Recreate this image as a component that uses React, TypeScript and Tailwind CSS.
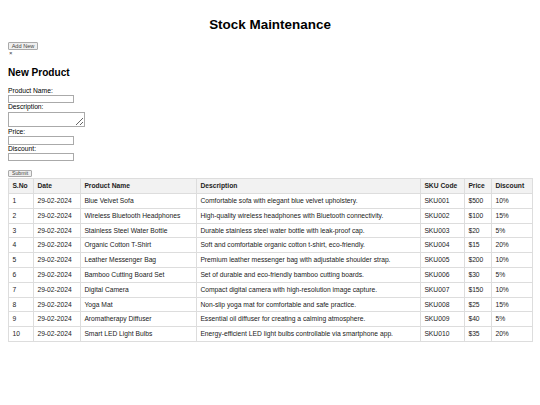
const products = [
  { name: 'Blue Velvet Sofa', desc: 'Comfortable sofa with elegant blue velvet upholstery.', sku: 'SKU001', price: '$500', disc: '10%' },
  { name: 'Wireless Bluetooth Headphones', desc: 'High-quality wireless headphones with Bluetooth connectivity.', sku: 'SKU002', price: '$100', disc: '15%' },
  { name: 'Stainless Steel Water Bottle', desc: 'Durable stainless steel water bottle with leak-proof cap.', sku: 'SKU003', price: '$20', disc: '5%' },
  { name: 'Organic Cotton T-Shirt', desc: 'Soft and comfortable organic cotton t-shirt, eco-friendly.', sku: 'SKU004', price: '$15', disc: '20%' },
  { name: 'Leather Messenger Bag', desc: 'Premium leather messenger bag with adjustable shoulder strap.', sku: 'SKU005', price: '$200', disc: '10%' },
  { name: 'Bamboo Cutting Board Set', desc: 'Set of durable and eco-friendly bamboo cutting boards.', sku: 'SKU006', price: '$30', disc: '5%' },
  { name: 'Digital Camera', desc: 'Compact digital camera with high-resolution image capture.', sku: 'SKU007', price: '$150', disc: '10%' },
  { name: 'Yoga Mat', desc: 'Non-slip yoga mat for comfortable and safe practice.', sku: 'SKU008', price: '$25', disc: '15%' },
  { name: 'Aromatherapy Diffuser', desc: 'Essential oil diffuser for creating a calming atmosphere.', sku: 'SKU009', price: '$40', disc: '5%' },
  { name: 'Smart LED Light Bulbs', desc: 'Energy-efficient LED light bulbs controllable via smartphone app.', sku: 'SKU010', price: '$35', disc: '20%' },
];

const headers = ['S.No', 'Date', 'Product Name', 'Description', 'SKU Code', 'Price', 'Discount'];
const widths = ['w-[25px]', 'w-[47px]', 'w-[116px]', 'w-[224px]', 'w-[44px]', 'w-[27px]', 'w-[41px]'];

export default function App() {
  return (
    <div className="min-h-[405px] bg-white px-[8px] font-['Liberation_Sans',Arial,sans-serif] text-[6.72px] leading-[7.7px] text-black">
      <h1 className="pt-[16.6px] text-center text-[13.44px] font-bold leading-[15.5px]">Stock Maintenance</h1>

      <button className="mt-[10.2px] block h-[8px] w-[30px] rounded-[1px] border-[0.5px] border-[#aaa] bg-[#efefef] text-[5.6px] leading-[6px] text-[#444]">
        Add New
      </button>
      <div className="pl-[1px] text-[6px] leading-[7.7px] text-[#333]">×</div>

      {/* form */}
      <h2 className="mt-[9px] text-[10.08px] font-bold leading-[11.6px]">New Product</h2>
      <div className="mt-[8px]">Product Name:</div>
      <input className="mt-[1px] block h-[8px] w-[66px] border-[0.5px] border-[#aaa]" />
      <div>Description:</div>
      <textarea className="mt-[0.6px] block h-[15px] w-[77px] resize-y border-[0.5px] border-[#aaa]" />
      <div className="mt-[1.9px]">Price:</div>
      <input className="mt-[0.1px] block h-[8.3px] w-[66px] border-[0.5px] border-[#aaa]" />
      <div>Discount:</div>
      <input className="mt-[0.3px] block h-[8.4px] w-[66px] border-[0.5px] border-[#aaa]" />
      <button className="mt-[9.3px] block h-[6.7px] w-[24px] rounded-[1px] border-[0.5px] border-[#aaa] bg-[#efefef] text-[5.2px] leading-[5.5px] text-[#444]">
        Submit
      </button>

      <table className="mt-[0.6px] w-[524px] table-fixed border-collapse text-[#222]">
        <thead>
          <tr className="h-[15.4px] bg-[#f2f2f2]">
            {headers.map((h, i) => (
              <th key={h} className={`${widths[i]} border-[0.5px] border-[#ddd] px-[3.4px] text-left font-bold`}>
                {h}
              </th>
            ))}
          </tr>
        </thead>
        <tbody>
          {products.map((p, i) => (
            <tr key={p.sku} className="h-[14.8px]">
              <td className="border-[0.5px] border-[#ddd] px-[3.4px]">{i + 1}</td>
              <td className="border-[0.5px] border-[#ddd] px-[3.4px]">29-02-2024</td>
              <td className="border-[0.5px] border-[#ddd] px-[3.4px] whitespace-nowrap">{p.name}</td>
              <td className="border-[0.5px] border-[#ddd] px-[3.4px] whitespace-nowrap">{p.desc}</td>
              <td className="border-[0.5px] border-[#ddd] px-[3.4px]">{p.sku}</td>
              <td className="border-[0.5px] border-[#ddd] px-[3.4px]">{p.price}</td>
              <td className="border-[0.5px] border-[#ddd] px-[3.4px]">{p.disc}</td>
            </tr>
          ))}
        </tbody>
      </table>
    </div>
  );
}
